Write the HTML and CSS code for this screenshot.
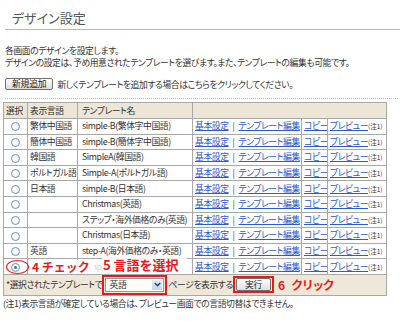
FILE: index.html
```html
<!DOCTYPE html>
<html lang="ja">
<head>
<meta charset="utf-8">
<link rel="stylesheet" href="styles.css">
</head>
<body>
<div class="page">
  <h1 class="title">デザイン設定</h1>
  <p class="intro">各画面のデザインを設定します。<br>デザインの設定は、予め用意されたテンプレートを選びます。また、テンプレートの編集も可能です。</p>
  <div class="addrow"><button class="btn">新規追加</button><span>新しくテンプレートを追加する場合はこちらをクリックしてください。</span></div>
  <div class="dots"></div>
  <div class="tablewrap">
    <table class="tpl">
      <colgroup><col class="c1"><col class="c2"><col class="c3"><col class="c4"><col class="c5"><col class="c6"></colgroup>
      <thead>
        <tr><th>選択</th><th>表示言語</th><th>テンプレート名</th><th colspan="3"></th></tr>
      </thead>
      <tbody>
        <tr><td class="sel"><span class="radio"></span></td><td>繁体中国語</td><td>simple-B(繁体字中国語)</td><td><a href="#">基本設定</a><span class="sep">|</span><a href="#">テンプレート編集</a></td><td><a href="#">コピー</a></td><td><a href="#">プレビュー</a><small>(注1)</small></td></tr>
        <tr><td class="sel"><span class="radio"></span></td><td>簡体中国語</td><td>simple-B(簡体字中国語)</td><td><a href="#">基本設定</a><span class="sep">|</span><a href="#">テンプレート編集</a></td><td><a href="#">コピー</a></td><td><a href="#">プレビュー</a><small>(注1)</small></td></tr>
        <tr><td class="sel"><span class="radio"></span></td><td>韓国語</td><td>SimpleA(韓国語)</td><td><a href="#">基本設定</a><span class="sep">|</span><a href="#">テンプレート編集</a></td><td><a href="#">コピー</a></td><td><a href="#">プレビュー</a><small>(注1)</small></td></tr>
        <tr><td class="sel"><span class="radio"></span></td><td>ポルトガル語</td><td>Simple-A(ポルトガル語)</td><td><a href="#">基本設定</a><span class="sep">|</span><a href="#">テンプレート編集</a></td><td><a href="#">コピー</a></td><td><a href="#">プレビュー</a><small>(注1)</small></td></tr>
        <tr><td class="sel"><span class="radio"></span></td><td>日本語</td><td>simple-B(日本語)</td><td><a href="#">基本設定</a><span class="sep">|</span><a href="#">テンプレート編集</a></td><td><a href="#">コピー</a></td><td><a href="#">プレビュー</a><small>(注1)</small></td></tr>
        <tr><td class="sel"><span class="radio"></span></td><td></td><td>Christmas(英語)</td><td><a href="#">基本設定</a><span class="sep">|</span><a href="#">テンプレート編集</a></td><td><a href="#">コピー</a></td><td><a href="#">プレビュー</a><small>(注1)</small></td></tr>
        <tr><td class="sel"><span class="radio"></span></td><td></td><td>ステップ・海外価格のみ(英語)</td><td><a href="#">基本設定</a><span class="sep">|</span><a href="#">テンプレート編集</a></td><td><a href="#">コピー</a></td><td><a href="#">プレビュー</a><small>(注1)</small></td></tr>
        <tr><td class="sel"><span class="radio"></span></td><td></td><td>Christmas(日本語)</td><td><a href="#">基本設定</a><span class="sep">|</span><a href="#">テンプレート編集</a></td><td><a href="#">コピー</a></td><td><a href="#">プレビュー</a><small>(注1)</small></td></tr>
        <tr><td class="sel"><span class="radio"></span></td><td>英語</td><td>step-A(海外価格のみ・英語)</td><td><a href="#">基本設定</a><span class="sep">|</span><a href="#">テンプレート編集</a></td><td><a href="#">コピー</a></td><td><a href="#">プレビュー</a><small>(注1)</small></td></tr>
        <tr><td class="sel"><span class="radio on"></span></td><td></td><td class="faded">Simple-A(英語)</td><td><a href="#">基本設定</a><span class="sep">|</span><a href="#">テンプレート編集</a></td><td><a href="#">コピー</a></td><td><a href="#">プレビュー</a><small>(注1)</small></td></tr>
        <tr class="foot"><td colspan="6">
          <div class="footrow">
            <span>*選択されたテンプレートで</span>
            <span class="hl"><span class="selbox"><span class="seltext">英語</span><span class="selarrow"><svg width="7" height="5" viewBox="0 0 7 5"><path d="M0.8 1 L3.5 3.8 L6.2 1" fill="none" stroke="#1d3f8a" stroke-width="1.4"/></svg></span></span></span>
            <span class="pgtext">ページを表示する</span>
            <span class="hl hlbtn"><button class="btn btn2">実行</button></span>
            <span class="ann ann6">6<span class="ann6k">クリック</span></span>
          </div>
        </td></tr>
      </tbody>
    </table>
    <span class="ellipse"></span>
    <span class="ann ann4">4 チェック</span>
    <span class="ann ann5">5 言語を選択</span>
  </div>
  <p class="note">(注1)表示言語が確定している場合は、プレビュー画面での言語切替はできません。</p>
</div>
</body>
</html>
```

FILE: styles.css
```css
html, body {
  margin: 0;
  padding: 0;
  background: #fff;
}
body {
  font-family: "Noto Sans CJK JP", "Noto Sans", sans-serif;
  font-size: 8.8px;
  letter-spacing: -0.4px;
  color: #333;
  font-feature-settings: "palt";
}
.page {
  width: 400px;
}
.title {
  margin: 0 0 0 5px;
  padding: 10px 0 3px 7px;
  font-size: 13px;
  line-height: 16px;
  font-weight: normal;
  letter-spacing: 0;
  color: #555;
  border-bottom: 1px solid #9cbfe6;
}
.intro {
  margin: 15px 0 0 5px;
  line-height: 11.5px;
}
.addrow {
  margin: 10px 0 0 5px;
  display: flex;
  align-items: center;
  gap: 4px;
  height: 12px;
}
.btn {
  font-family: inherit;
  font-size: 8.8px;
  letter-spacing: -0.2px;
  font-feature-settings: "palt";
  line-height: 10px;
  padding: 0 6px;
  height: 12px;
  border: 1px solid #6f6f6f;
  border-radius: 2px;
  background: linear-gradient(#ffffff, #dedede);
  color: #222;
  margin: 0;
}
.dots {
  margin: 8px 2px 0 5px;
  border-top: 1px dotted #b8b8b8;
}
.tablewrap {
  position: relative;
  margin: 3px 0 0 3px;
  width: 383px;
}
.tpl {
  border-collapse: collapse;
  table-layout: fixed;
  width: 383px;
  border: 1px solid #999;
}
.c1 { width: 24px; }
.c2 { width: 50px; }
.c3 { width: 115px; }
.c4 { width: 109px; }
.c5 { width: 26px; }
.c6 { width: 59px; }
.tpl th, .tpl td {
  border: 1px solid #a8a8a8;
  padding: 0 0 0 2px;
  white-space: nowrap;
  overflow: hidden;
  line-height: 12px;
  text-align: left;
}
.tpl thead tr {
  height: 16px;
}
.tpl th {
  background: #ede6d6;
  font-weight: normal;
  color: #333;
}
.tpl tbody tr {
  height: 15.6px;
}
.tpl td:nth-child(3), .tpl th:nth-child(3) {
  padding-left: 4px;
}
.tpl td.sel {
  padding: 0;
  text-align: center;
}
.sep {
  margin: 0 4px 0 4px;
  color: #444;
}
.radio {
  display: inline-block;
  width: 7px;
  height: 7px;
  border: 1px solid #6f93ba;
  border-radius: 50%;
  background: radial-gradient(circle at 50% 40%, #ffffff 40%, #dfe8f2 100%);
  vertical-align: middle;
  position: relative;
}
.radio.on::after {
  content: "";
  position: absolute;
  left: 2px;
  top: 2px;
  width: 3px;
  height: 3px;
  border-radius: 50%;
  background: #3d7f5c;
}
.tpl a {
  color: #2a5bd0;
  text-decoration: underline;
}
.tpl small {
  font-size: 6.5px;
  letter-spacing: 0;
  color: #333;
}
.faded {
  color: #d2d2d2;
}
.foot td {
  background: #efe8d9;
  padding: 0 0 0 2px;
  height: 18px;
}
.footrow {
  display: flex;
  align-items: center;
}
.hl {
  display: inline-flex;
  border: 2px solid #e41c1c;
  padding: 1px;
  margin: 0;
}
.selbox {
  display: inline-flex;
  align-items: center;
  width: 57px;
  height: 12px;
  border: 1px solid #9a9a9a;
  background: #fffdf5;
}
.seltext {
  flex: 1;
  padding-left: 3px;
  line-height: 12px;
}
.selarrow {
  width: 10px;
  height: 10px;
  margin-right: 1px;
  background: linear-gradient(#e3ecf8, #c6d6ee);
  display: flex;
  align-items: center;
  justify-content: center;
}
.pgtext {
  margin-left: 1px;
}
.hlbtn {
  padding: 0 1px;
}
.btn2 {
  height: 13px;
  padding: 0 8px;
}
.ann {
  color: #e41c1c;
  font-weight: bold;
  letter-spacing: 0;
  font-feature-settings: normal;
  white-space: nowrap;
}
.ann6 {
  font-size: 12px;
  line-height: 14px;
  margin-left: 4px;
}
.ann6k {
  margin-left: 6px;
  letter-spacing: -1.5px;
}
.ann4 {
  position: absolute;
  left: 28px;
  top: 158px;
  font-size: 12px;
  line-height: 14px;
  background: rgba(255, 255, 255, 0.85);
  padding: 0 4px 0 1px;
}
.ann5 {
  position: absolute;
  left: 99px;
  top: 155px;
  font-size: 13px;
  line-height: 15px;
  background: rgba(255, 255, 255, 0.85);
  padding: 0 8px 0 1px;
}
.ellipse {
  position: absolute;
  left: 3px;
  top: 158px;
  width: 21px;
  height: 12px;
  border: 1.5px solid #e41c1c;
  border-radius: 50%;
}
.note {
  margin: 2px 0 0 3px;
  line-height: 11px;
}
```
